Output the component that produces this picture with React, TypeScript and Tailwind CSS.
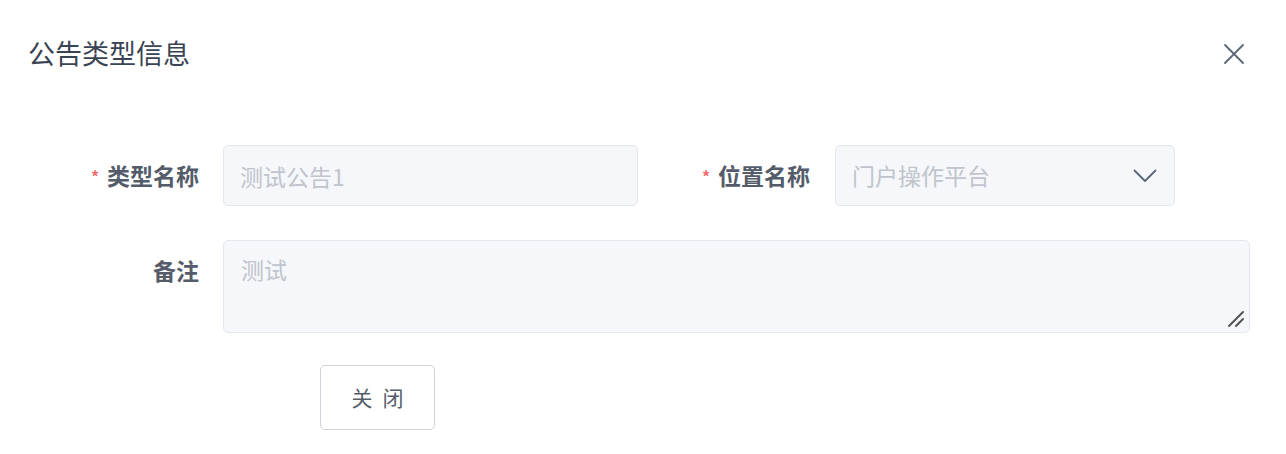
const font = { fontFamily: '"Noto Sans CJK SC", "Noto Sans", sans-serif' };

function Required() {
  return <span className="mr-[8px] self-start pt-[10px] text-[16px] leading-[16px] text-[#f56c6c]">*</span>;
}

export default function App() {
  return (
    <div className="h-[454px] w-[1286px] bg-white" style={font}>
      {/* 헤더 */}
      <div className="flex items-center justify-between pl-[28px] pr-[41px] pt-[38px]">
        <h1 className="text-[27px] leading-[30px] text-[#3a4353]">公告类型信息</h1>
        <svg width="22" height="22" viewBox="0 0 22 22" className="mt-[2px]">
          <path d="M2 2 L20 20 M20 2 L2 20" stroke="#5b6677" strokeWidth="1.8" strokeLinecap="round" />
        </svg>
      </div>

      <div className="mt-[77px] flex flex-col">
        {/* 1행 */}
        <div className="flex items-center">
          <label className="flex w-[223px] items-center justify-end pr-[24px] text-[23px] font-bold text-[#545c69]">
            <Required />
            类型名称
          </label>
          <input
            disabled
            value="测试公告1"
            className="h-[61px] w-[415px] rounded-[5px] border border-[#e4e7ed] bg-[#f5f7fa] px-[16px] text-[23px] text-[#c0c4cc]"
          />
          <label className="flex w-[197px] items-center justify-end pr-[25px] text-[23px] font-bold text-[#545c69]">
            <Required />
            位置名称
          </label>
          <div className="flex h-[61px] w-[340px] items-center justify-between rounded-[5px] border border-[#e4e7ed] bg-[#f5f7fa] pl-[16px] pr-[17px]">
            <span className="text-[23px] text-[#c0c4cc]">门户操作平台</span>
            <svg width="24" height="14" viewBox="0 0 24 14">
              <path d="M1.5 1.5 L12 12 L22.5 1.5" fill="none" stroke="#5b6677" strokeWidth="1.8" strokeLinecap="round" strokeLinejoin="round" />
            </svg>
          </div>
        </div>

        {/* 2행 */}
        <div className="mt-[34px] flex items-start">
          <label className="flex h-[61px] w-[223px] items-center justify-end pr-[24px] text-[23px] font-bold text-[#545c69]">
            备注
          </label>
          <div className="relative">
            <textarea
              disabled
              value="测试"
              className="block h-[93px] w-[1027px] resize-none rounded-[5px] border border-[#e4e7ed] bg-[#f5f7fa] px-[17px] py-[11px] text-[23px] text-[#c0c4cc]"
            />
            <svg className="absolute bottom-[5px] right-[5px]" width="18" height="18" viewBox="0 0 18 18">
              <path d="M2 16 L16 2 M9 16 L16 9" stroke="#555" strokeWidth="2" strokeLinecap="round" />
            </svg>
          </div>
        </div>

        {/* 버튼 */}
        <div className="mt-[32px] pl-[320px]">
          <button className="h-[65px] w-[115px] rounded-[5px] border border-[#cfd3d9] bg-white pl-[10px] text-[21px] tracking-[10px] text-[#555d6b]">
            关闭
          </button>
        </div>
      </div>
    </div>
  );
}
